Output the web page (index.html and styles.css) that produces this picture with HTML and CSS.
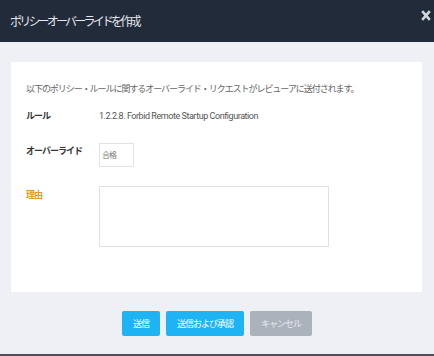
FILE: index.html
```
<!DOCTYPE html>
<html lang="ja">
<head>
    <meta charset="UTF-8">
    <meta name="viewport" content="width=device-width, initial-scale=1.0">
    <title>ポリシーオーバーライドを作成</title>
    <link rel="stylesheet" href="styles.css">
</head>
<body>

    <div class="modal">
        <div class="modal-header">
            <h1>ポリシーオーバーライドを作成</h1>
            <svg class="close" width="10" height="11" viewBox="0 0 10 11">
                <path d="M1.2 1.2 L8.8 9.8 M8.8 1.2 L1.2 9.8" stroke="#d3d7dd" stroke-width="2.6" fill="none"/>
            </svg>
        </div>

        <div class="modal-body">
            <div class="card">
                <p class="intro">以下のポリシー・ルールに関するオーバーライド・リクエストがレビューアに送付されます。</p>

                <div class="row">
                    <div class="label">ルール</div>
                    <div class="value">1.2.2.8. Forbid Remote Startup Configuration</div>
                </div>

                <div class="row row-override">
                    <div class="label">オーバーライド</div>
                    <div class="select">合格</div>
                </div>

                <div class="row row-reason">
                    <div class="label required">理由</div>
                    <textarea class="reason"></textarea>
                </div>
            </div>
        </div>

        <div class="modal-footer">
            <button class="btn btn-primary">送信</button>
            <button class="btn btn-primary">送信および承認</button>
            <button class="btn btn-disabled">キャンセル</button>
        </div>
    </div>

</body>
</html>
```

FILE: styles.css
```
body {
    margin: 0;
    font-family: "Noto Sans CJK JP", "Roboto", sans-serif;
    background-color: #eef0f5;
}
.modal {
    display: flex;
    flex-direction: column;
    height: 356px;
    box-sizing: border-box;
    border-bottom: 2px solid #4b505c;
}
.modal-header {
    height: 42px;
    flex: none;
    background-color: #222b3a;
    display: flex;
    align-items: flex-start;
    justify-content: space-between;
    padding: 0 3px 0 10px;
}
.modal-header h1 {
    margin: 0;
    font-size: 12px;
    font-weight: normal;
    letter-spacing: -2.8px;
    line-height: 42px;
    color: #e4e7ec;
}
.close {
    margin-top: 10px;
}
.modal-body {
    padding: 20px 12px 0 11px;
}
.card {
    background: #fff;
    height: 230px;
    box-sizing: border-box;
    padding: 20px 15px 0;
}
.intro {
    margin: 0;
    font-size: 9px;
    line-height: 14px;
    letter-spacing: -1.05px;
    color: #666;
}
.row {
    display: flex;
    align-items: flex-start;
    margin-top: 13px;
}
.row-override {
    margin-top: 20px;
}
.row-reason {
    margin-top: 19px;
}
.label {
    width: 73px;
    font-size: 9px;
    line-height: 14px;
    font-weight: bold;
    letter-spacing: -1px;
    color: #333;
}
.row-override .label {
    padding-top: 1px;
}
.row-reason .label {
    padding-top: 2px;
}
.required {
    color: #e8952c;
}
.value {
    font-family: "Roboto", sans-serif;
    font-size: 9px;
    line-height: 14px;
    letter-spacing: -0.45px;
    color: #555;
}
.select {
    width: 35px;
    height: 24px;
    box-sizing: border-box;
    border: 1px solid #e2e2e2;
    font-size: 8px;
    line-height: 22px;
    padding-left: 2px;
    letter-spacing: -1px;
    color: #777;
}
.reason {
    width: 230px;
    height: 61px;
    box-sizing: border-box;
    border: 1px solid #e0e0e0;
    margin: 0;
    resize: none;
}
.modal-footer {
    flex: 1;
    display: flex;
    justify-content: center;
    align-items: flex-start;
    gap: 6px;
    padding: 19px 0 0;
}
.btn {
    height: 25px;
    border: none;
    border-radius: 2px;
    padding: 0 11px;
    font-family: "Noto Sans CJK JP", sans-serif;
    font-size: 9px;
    letter-spacing: -1px;
    color: #fff;
}
.btn-primary {
    background-color: #1eb4f4;
}
.btn-disabled {
    background-color: #aab3bc;
    color: #e6eaee;
}
```
